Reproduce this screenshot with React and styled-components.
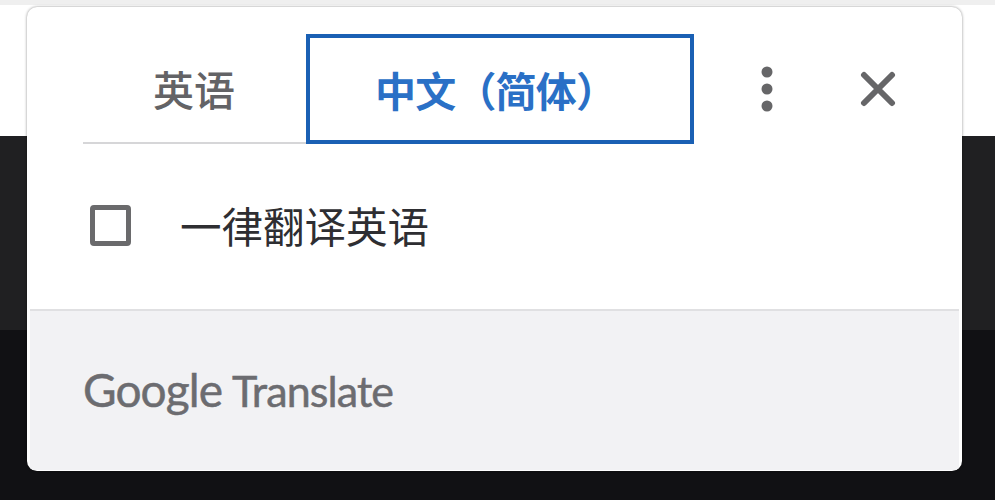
import React from 'react';
import styled, { createGlobalStyle } from 'styled-components';

const GlobalStyle = createGlobalStyle`
  html, body {
    margin: 0;
    padding: 0;
    background: #111114;
  }
`;

const Page = styled.div`
  position: relative;
  width: 995px;
  height: 500px;
  overflow: hidden;
  display: flex;
  flex-direction: column;
`;

const TopBand = styled.div`
  height: 136px;
  flex: none;
  background: #fff;
  border-top: 5px solid #efefef;
  box-sizing: border-box;
`;

const MiddleBand = styled.div`
  height: 194px;
  flex: none;
  background: #202022;
`;

const BottomBand = styled.div`
  flex: 1;
  background: #111114;
`;

const Card = styled.div`
  position: absolute;
  left: 27px;
  top: 7px;
  width: 935px;
  height: 464px;
  box-sizing: border-box;
  background: #fff;
  border-radius: 10px;
  box-shadow: 0 0 3px rgba(0, 0, 0, 0.45);
  display: flex;
  flex-direction: column;
  overflow: hidden;
  font-family: "Liberation Sans", "Noto Sans CJK SC", sans-serif;
`;

const Header = styled.div`
  display: flex;
  align-items: flex-start;
  padding: 27px 0 0 56px;
`;

const Tabs = styled.div`
  display: flex;
  width: 611px;
  height: 110px;
`;

const Tab = styled.div`
  box-sizing: border-box;
  display: flex;
  align-items: center;
  font-size: 41px;
  font-family: "Noto Sans CJK SC", sans-serif;
  font-weight: ${props => (props.$active ? 700 : 500)};
  letter-spacing: ${props => (props.$active ? '-0.8px' : '0')};
  width: ${props => (props.$active ? '388px' : '223px')};
  padding-left: ${props => (props.$active ? '65px' : '70px')};
  color: ${props => (props.$active ? '#2a70c6' : '#636366')};
  border: ${props => (props.$active ? '4px solid #1a60b4' : 'none')};
  border-bottom: ${props => (props.$active ? '4px solid #1a60b4' : '2px solid #d6d6d8')};
`;

const IconButton = styled.button`
  flex: none;
  width: ${props => props.$width}px;
  height: 110px;
  padding: 0;
  border: none;
  background: none;
  display: flex;
  align-items: center;
  justify-content: center;
`;

const Body = styled.label`
  flex: 1;
  display: flex;
  align-items: center;
  gap: 49px;
  padding: 0 0 3px 63px;
`;

const Checkbox = styled.span`
  flex: none;
  width: 41px;
  height: 41px;
  box-sizing: border-box;
  border: 5px solid #6a6a6c;
  border-radius: 4px;
`;

const BodyText = styled.span`
  font-size: 41.5px;
  font-family: "Noto Sans CJK SC", sans-serif;
  font-weight: 400;
  color: #2e2e32;
`;

const Footer = styled.div`
  height: 161px;
  flex: none;
  box-sizing: border-box;
  margin: 0 3px 1px;
  background: #f2f2f4;
  border-top: 2px solid #e0e0e2;
  display: flex;
  align-items: center;
  padding: 0 0 2px 53px;
`;

const Brand = styled.span`
  font-family: Lato, sans-serif;
  font-size: 46px;
  letter-spacing: -0.9px;
  color: #6c6c70;
  -webkit-text-stroke: 0.5px #6c6c70;
`;

const TranslateWord = styled.span`
  font-size: 43px;
  margin-left: 10px;
`;

export default function App() {
  return (
    <Page>
      <GlobalStyle />
      <TopBand />
      <MiddleBand />
      <BottomBand />
      <Card>
        <Header>
          <Tabs>
            <Tab>英语</Tab>
            <Tab $active>中文（简体）</Tab>
          </Tabs>
          <IconButton $width={145}>
            <svg width="14" height="48" viewBox="0 0 14 48">
              <circle cx="7" cy="7" r="5.5" fill="#666668" />
              <circle cx="7" cy="24" r="5.5" fill="#666668" />
              <circle cx="7" cy="41" r="5.5" fill="#666668" />
            </svg>
          </IconButton>
          <IconButton $width={78}>
            <svg width="36" height="36" viewBox="0 0 36 36">
              <path d="M4 4 L32 32 M32 4 L4 32" stroke="#666668" strokeWidth="6" strokeLinecap="round" />
            </svg>
          </IconButton>
        </Header>
        <Body>
          <Checkbox />
          <BodyText>一律翻译英语</BodyText>
        </Body>
        <Footer>
          <Brand>Google<TranslateWord>Translate</TranslateWord></Brand>
        </Footer>
      </Card>
    </Page>
  );
}
